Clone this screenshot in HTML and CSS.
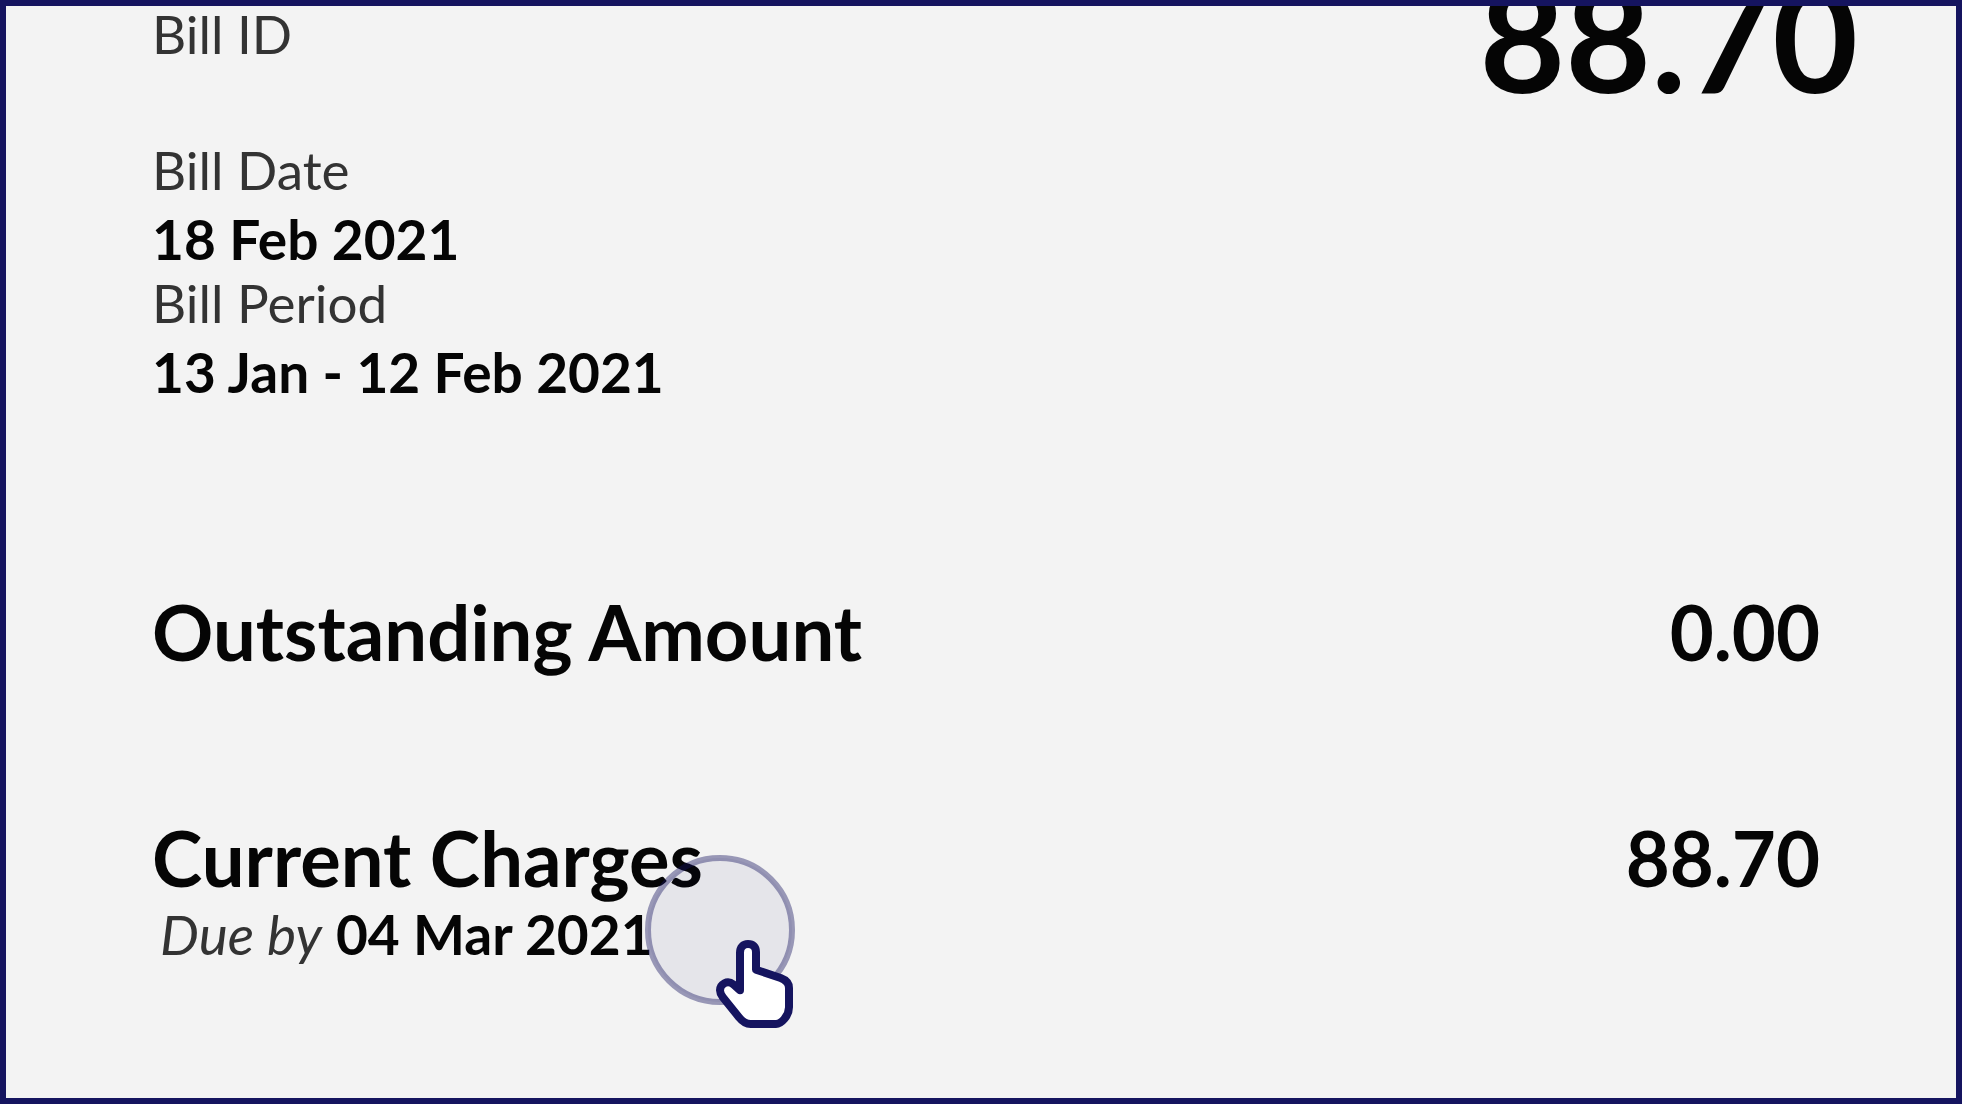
FILE: index.html
```html
<!DOCTYPE html>
<html lang="en">
<head>
    <meta charset="UTF-8">
    <meta name="viewport" content="width=device-width, initial-scale=1.0">
    <title>Bill</title>
    <link rel="stylesheet" href="styles.css">
</head>
<body>
    <main class="bill">
        <section class="top">
            <dl class="details">
                <dt class="bill-id">Bill ID</dt>
                <dt>Bill Date</dt>
                <dd>18 Feb 2021</dd>
                <dt>Bill Period</dt>
                <dd>13 Jan - 12 Feb 2021</dd>
            </dl>
            <div class="total">88.70</div>
        </section>

        <section class="charge">
            <h2>Outstanding Amount</h2>
            <div class="amount">0.00</div>
        </section>

        <section class="charge">
            <div class="label">
                <h2>Current Charges</h2>
                <p class="due"><em>Due by</em> <strong>04 Mar 2021</strong></p>
                <svg class="pointer" viewBox="60 60 480 540" aria-hidden="true">
                    <circle cx="300" cy="300" r="216" fill="#15145f" fill-opacity=".06" stroke="#15145f" stroke-opacity=".41" stroke-width="18"/>
                    <path d="M408 419V366C408 351 399 342 384 342C369 342 360 352 360 368V481L340 463C322 449 300 462 300 481C300 489 303 494 308 501L358 563C368 576 378 582 392 582H468C484 582 507 557 507 532V474C507 460 498 450 482 444Z" fill="#fff" stroke="#15145f" stroke-width="24" stroke-linejoin="round"/>
                </svg>
            </div>
            <div class="amount">88.70</div>
        </section>
    </main>
</body>
</html>
```
FILE: styles.css
```css
*{
    margin: 0;
    padding: 0;
    box-sizing: border-box;
}
body{
    font-family: Lato, "Open Sans", sans-serif;
    color: #050505;
    background-color: #f3f3f3;
}
.bill{
    min-height: 100vh;
    padding: 0 98px 0 146px;
    border: 6px solid #15145f;
    overflow: hidden;
}
.top{
    display: flex;
    justify-content: space-between;
    align-items: flex-start;
    margin-bottom: 184px;
}
.details{
    margin-top: -4px;
    font-size: 53px;
    line-height: 64px;
}
.details dt{
    color: #333;
    font-weight: 400;
}
.details .bill-id{
    margin-bottom: 72px;
}
.details dd{
    margin-top: 5px;
    font-size: 55px;
    font-weight: 700;
}
.total{
    margin-top: -44px;
    font-size: 148px;
    line-height: 148px;
    font-weight: 700;
}
.charge{
    display: flex;
    justify-content: space-between;
    align-items: flex-start;
    padding-right: 38px;
}
.charge + .charge{
    margin-top: 138px;
}
.charge h2,
.amount{
    font-size: 76px;
    line-height: 88px;
    font-weight: 700;
}
.label{
    position: relative;
}
.due{
    padding-left: 8px;
    font-size: 55px;
    line-height: 64px;
}
.due em{
    color: #333;
    font-weight: 400;
}
.due strong{
    font-weight: 700;
}
/* hand and click ring lie over the end of the label */
.pointer{
    position: absolute;
    left: 488px;
    top: 36px;
    width: 160px;
    height: 180px;
}
```
